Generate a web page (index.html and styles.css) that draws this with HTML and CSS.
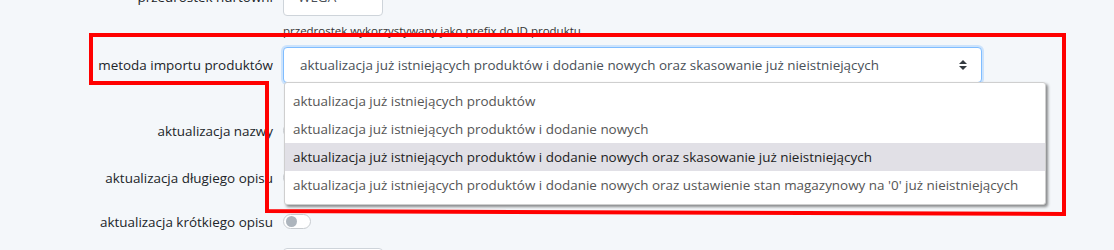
FILE: index.html
```html
<!DOCTYPE html>
<html lang="pl">
<head>
<meta charset="utf-8">
<title>Import</title>
<link rel="stylesheet" href="styles.css">
</head>
<body>
<div class="form">
  <div class="row row-prefix">
    <label class="lbl">przedrostek hurtowni</label>
    <div class="field">
      <div class="input">WEGA</div>
      <div class="help">przedrostek wykorzystywany jako prefix do ID produktu</div>
    </div>
  </div>
  <div class="row row-method">
    <label class="lbl">metoda importu produktów</label>
    <div class="field">
      <div class="select">
        <span>aktualizacja już istniejących produktów i dodanie nowych oraz skasowanie już nieistniejących</span>
        <svg class="arrows" width="8" height="10" viewBox="0 0 8 10"><path d="M4 0 L8 4 H0 Z M0 6 H8 L4 10 Z" fill="#343a40"/></svg>
      </div>
    </div>
  </div>
  <div class="row row-switch r1">
    <label class="lbl">aktualizacja nazwy</label>
    <div class="field"><span class="switch"></span></div>
  </div>
  <div class="row row-switch r2">
    <label class="lbl">aktualizacja długiego opisu</label>
    <div class="field"><span class="switch"></span></div>
  </div>
  <div class="row row-switch r3">
    <label class="lbl">aktualizacja krótkiego opisu</label>
    <div class="field"><span class="switch"></span></div>
  </div>
  <div class="row row-last">
    <label class="lbl"></label>
    <div class="field"><div class="input"></div></div>
  </div>
</div>

<ul class="dropdown">
  <li>aktualizacja już istniejących produktów</li>
  <li>aktualizacja już istniejących produktów i dodanie nowych</li>
  <li class="active">aktualizacja już istniejących produktów i dodanie nowych oraz skasowanie już nieistniejących</li>
  <li>aktualizacja już istniejących produktów i dodanie nowych oraz ustawienie stan magazynowy na '0' już nieistniejących</li>
</ul>

<svg class="mark" width="1114" height="250" viewBox="0 0 1114 250">
  <path d="M91 35 H1064 V214 L267 211 V83 H91 Z" fill="none" stroke="#ff0000" stroke-width="4" stroke-linejoin="miter"/>
</svg>
</body>
</html>
```
FILE: styles.css
```css
* { box-sizing: border-box; }
html, body { margin: 0; padding: 0; }
body {
  width: 1114px;
  height: 250px;
  overflow: hidden;
  background: #f4f7fa;
  font-family: "Open Sans", "Noto Sans", sans-serif;
  font-size: 13.45px;
  color: #212529;
  position: relative;
}
.form {
  margin-top: -21px;
  display: flex;
  flex-direction: column;
}
.row {
  display: grid;
  grid-template-columns: 273px 699px;
  column-gap: 10px;
  align-items: start;
}
.lbl {
  text-align: right;
  line-height: 36px;
  white-space: nowrap;
}
.input {
  width: 100px;
  height: 37px;
  background: #fff;
  border: 1px solid #ced4da;
  border-radius: 4px;
  padding: 0 14px;
  line-height: 35px;
  color: #495057;
}
.help {
  font-size: 11.5px;
  color: #333;
  margin-top: 8px;
  line-height: 14px;
}
.row-method { margin-top: 9px; }
.select {
  height: 36px;
  background: #fff;
  border: 1px solid #80bdff;
  box-shadow: 0 0 0 2px rgba(128, 189, 255, 0.35);
  border-radius: 4px;
  padding: 0 14px 0 16px;
  display: flex;
  align-items: center;
  justify-content: space-between;
  color: #495057;
}
.row-switch .lbl { line-height: 20px; }
.r1 { margin-top: 38px; }
.r2 { margin-top: 27px; }
.r3 { margin-top: 24px; }
.switch {
  display: block;
  width: 28px;
  height: 15px;
  margin-top: 2px;
  border: 1px solid #c8ccd0;
  border-radius: 8px;
  background: #fff;
  position: relative;
}
.switch::after {
  content: "";
  position: absolute;
  left: 2px;
  top: 1px;
  width: 11px;
  height: 11px;
  border-radius: 50%;
  background: #adb5bd;
}
.row-last { margin-top: 16px; }
.dropdown {
  position: absolute;
  left: 284px;
  top: 82px;
  width: 762px;
  margin: 0;
  padding: 4px 0 5px;
  list-style: none;
  background: #fff;
  border: 1px solid #cfcfcf;
  border-radius: 3px;
  box-shadow: 2px 2px 3px rgba(0, 0, 0, 0.45);
  color: #555;
}
.dropdown li {
  height: 28px;
  line-height: 28px;
  padding-left: 8px;
  white-space: nowrap;
}
.dropdown li.active {
  background: #e1e0e6;
  color: #222;
}
.mark {
  position: absolute;
  left: 0;
  top: 0;
  pointer-events: none;
}
```
